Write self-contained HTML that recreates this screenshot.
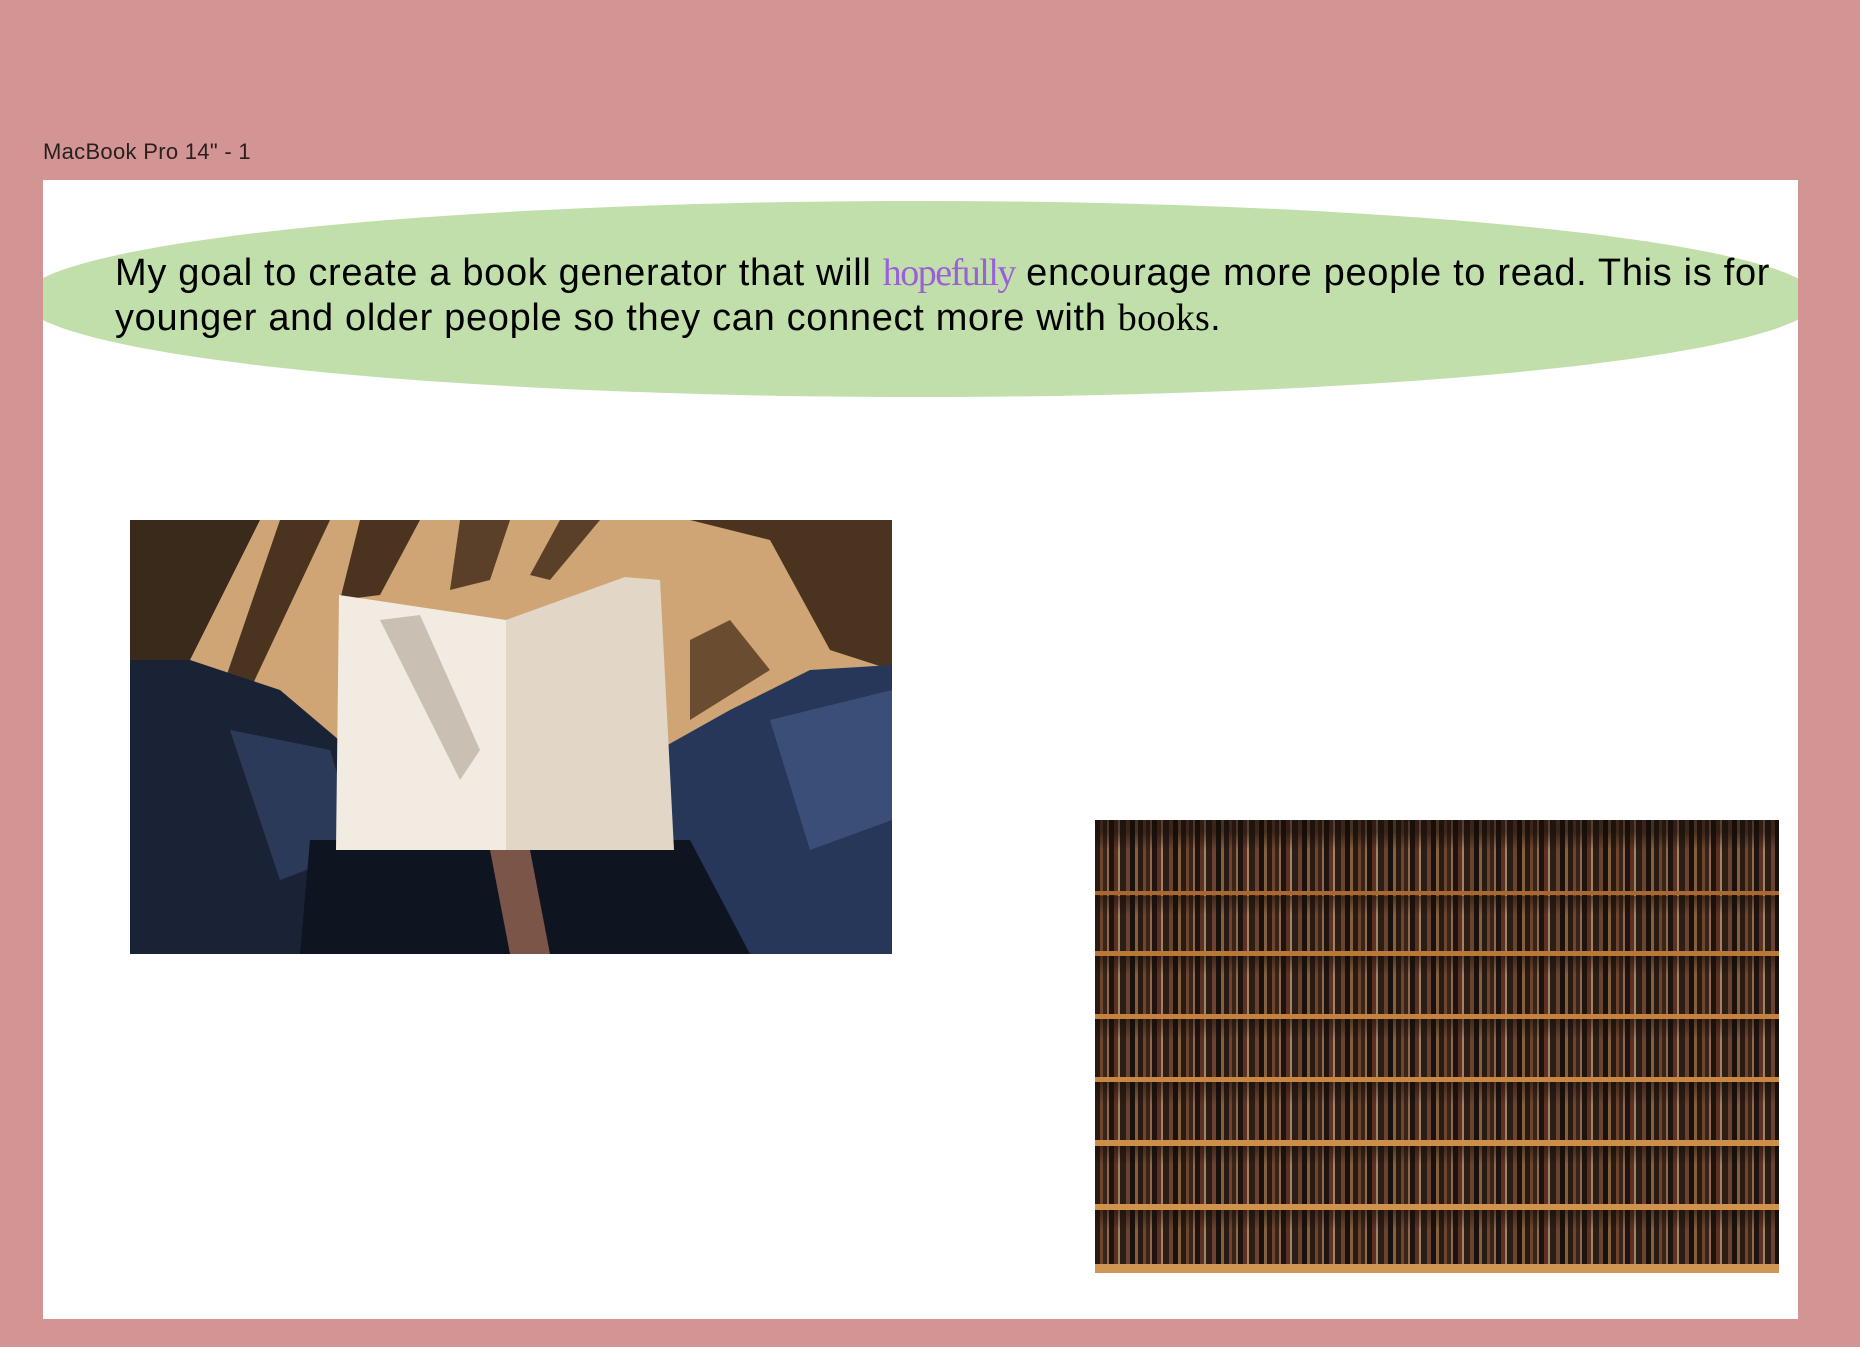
<!DOCTYPE html>
<html><head><meta charset="utf-8"><style>
html,body{margin:0;padding:0}
body{width:1860px;height:1347px;background:#d39494;position:relative;overflow:hidden;font-family:"Liberation Sans",sans-serif}
.label{position:absolute;left:43px;top:139px;font-size:22px;color:#2a1f1f;letter-spacing:0.3px}
.frame{position:absolute;left:43px;top:180px;width:1755px;height:1139px;background:#fff;overflow:hidden}
.ell{position:absolute;left:-21px;top:21px;width:1796px;height:196px;border-radius:50%;background:#c1dfab}
.txt{position:absolute;left:72px;top:71px;font-size:38px;line-height:45px;color:#000;white-space:nowrap;letter-spacing:0.68px}
.serif{font-family:"Liberation Serif",serif;letter-spacing:0.3px}
.hope{color:#9b5fd8;font-family:"Liberation Serif",serif;letter-spacing:-1.5px}
.img1{position:absolute;left:87px;top:340px;width:762px;height:434px}
.img2{position:absolute;left:1052px;top:640px;width:684px;height:453px;
background:
linear-gradient(180deg,transparent 0,transparent 71px,#a8682e 71px,#a8682e 75px,transparent 75px,transparent 131px,#b87838 131px,#b87838 136px,transparent 136px,transparent 194px,#c4823e 194px,#c4823e 199px,transparent 199px,transparent 257px,#c88844 257px,#c88844 262px,transparent 262px,transparent 320px,#cc8e48 320px,#cc8e48 326px,transparent 326px,transparent 384px,#d0924c 384px,#d0924c 390px,transparent 390px,transparent 444px,#d09656 444px),
linear-gradient(180deg,rgba(20,12,8,.55) 0,rgba(20,12,8,.55) 12px,transparent 30px,transparent 76px,rgba(20,12,8,.5) 76px,transparent 95px,transparent 136px,rgba(20,12,8,.5) 136px,transparent 155px,transparent 199px,rgba(20,12,8,.5) 199px,transparent 220px,transparent 262px,rgba(20,12,8,.5) 262px,transparent 285px,transparent 326px,rgba(20,12,8,.5) 326px,transparent 345px,transparent 390px,rgba(20,12,8,.5) 390px,transparent 410px),
repeating-linear-gradient(90deg,#2a1a12 0,#2a1a12 5px,#6e4630 5px,#6e4630 8px,#3a2418 8px,#3a2418 12px,#8e6a4e 12px,#8e6a4e 14px,#1e130e 14px,#1e130e 19px,#5e3222 19px,#5e3222 23px,#a08468 23px,#a08468 25px,#2c1d15 25px,#2c1d15 31px,#6a4430 31px,#6a4430 35px,#1a110c 35px,#1a110c 40px,#84603f 40px,#84603f 43px),
#3a2418}
</style></head><body>
<div class="label">MacBook Pro 14" - 1</div>
<div class="frame">
<div class="ell"></div>
<div class="txt">My goal to create a book generator that will <span class="hope">hopefully</span> encourage more people to read. This is for<br>younger and older people so they can connect more with <span class="serif">books</span>.</div>
<svg class="img1" viewBox="0 0 762 434" preserveAspectRatio="none">
<rect width="762" height="434" fill="#cfa576"/>
<polygon points="0,0 130,0 60,140 0,140" fill="#3a2a1c"/>
<polygon points="150,0 200,0 120,170 95,160" fill="#4a3420"/>
<polygon points="230,0 290,0 250,75 210,80" fill="#4a3420"/>
<polygon points="330,0 380,0 360,60 320,70" fill="#5a4028"/>
<polygon points="430,0 470,0 420,60 400,55" fill="#5a4028"/>
<polygon points="560,0 762,0 762,150 700,130 640,20" fill="#4a3420"/>
<polygon points="560,120 600,100 640,150 560,200" fill="#6a4c30"/>
<polygon points="0,140 60,140 150,170 209,220 209,434 0,434" fill="#1a2336"/>
<polygon points="534,227 600,190 680,150 762,145 762,434 534,434" fill="#27375a"/>
<polygon points="640,200 762,170 762,300 680,330" fill="#3a4e78"/>
<polygon points="100,210 200,230 230,330 150,360" fill="#2c3a5a"/>
<polygon points="180,320 560,320 620,434 170,434" fill="#0e1420"/>
<polygon points="209,75 376,100 376,330 206,330" fill="#f2ebe2"/>
<polygon points="376,100 495,57 530,60 544,330 376,330" fill="#e2d7c6"/>
<polygon points="250,100 290,95 350,230 330,260" fill="#c9bfb2"/>
<polygon points="360,330 400,330 420,434 380,434" fill="#7a5548"/>
</svg>
<div class="img2"></div>
</div>
</body></html>
